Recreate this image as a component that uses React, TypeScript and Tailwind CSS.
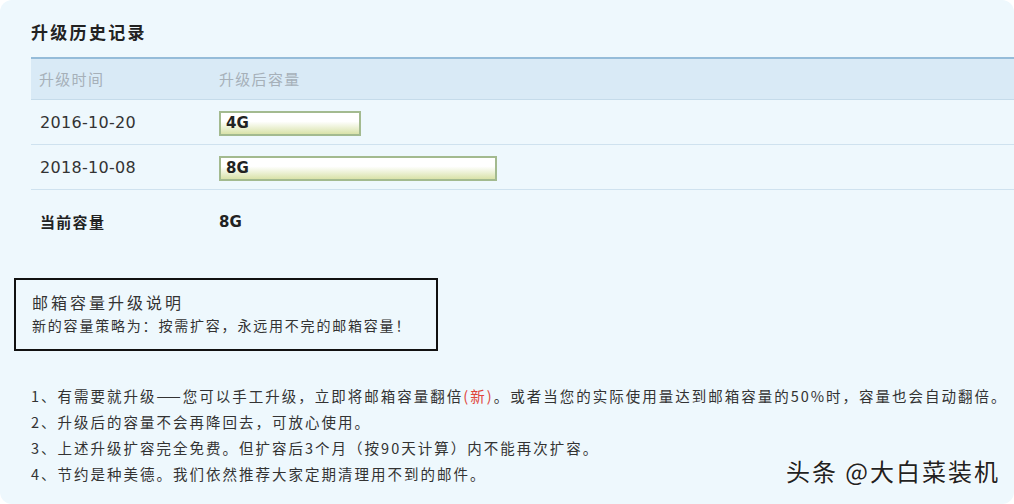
import React from 'react';

const history = [
  { date: '2016-10-20', size: '4G', width: 142 },
  { date: '2018-10-08', size: '8G', width: 278 },
];

const notes = [
  <>1、有需要就升级——您可以手工升级，立即将邮箱容量翻倍<span className="text-[#e0463c]">(新)</span>。或者当您的实际使用量达到邮箱容量的50%时，容量也会自动翻倍。</>,
  <>2、升级后的容量不会再降回去，可放心使用。</>,
  <>3、上述升级扩容完全免费。但扩容后3个月（按90天计算）内不能再次扩容。</>,
  <>4、节约是种美德。我们依然推荐大家定期清理用不到的邮件。</>,
];

export default function App() {
  return (
    <div className="w-[1014px] h-[504px] bg-white overflow-hidden font-['Noto_Sans_CJK_SC',sans-serif]">
      <div className="relative w-full h-full bg-[#eef8fd] rounded-[12px] overflow-hidden">
        {/* title */}
        <div className="pt-[20px] pl-[31px] h-[57px]">
          <h2 className="text-[17px] leading-[24px] font-bold tracking-[2.3px] text-[#222]">升级历史记录</h2>
        </div>

        {/* table */}
        <div className="ml-[31px] border-t-2 border-[#95bcd9]">
          <div className="grid grid-cols-[188px_1fr] h-[41px] items-center bg-[#d9eaf6] border-b border-[#c5dbea] text-[15px] tracking-[1.3px] text-[#a6b0b9]">
            <div className="pl-[8px]">升级时间</div>
            <div>升级后容量</div>
          </div>
          {history.map((row) => (
            <div key={row.date} className="grid grid-cols-[188px_1fr] h-[45px] items-center border-b border-[#cfe2ef]">
              <div className="pl-[9px] text-[16px] text-[#333] font-['DejaVu_Sans','Noto_Sans_CJK_SC',sans-serif] tracking-[0.3px] pt-[2px]">
                {row.date}
              </div>
              <div className="pt-[2px]">
                <div
                  className="h-[25px] border-2 border-[#a3ba8f] bg-gradient-to-b from-white from-40% to-[#d9e2a8] flex items-center pl-[5px] text-[15px] font-bold text-[#222] font-['DejaVu_Sans',sans-serif]"
                  style={{ width: row.width }}
                >
                  {row.size}
                </div>
              </div>
            </div>
          ))}
          <div className="grid grid-cols-[188px_1fr] h-[65px] items-center">
            <div className="pl-[9px] text-[15px] font-bold tracking-[1.3px] text-[#222]">当前容量</div>
            <div className="text-[15px] font-bold text-[#222] font-['DejaVu_Sans',sans-serif]">8G</div>
          </div>
        </div>

        {/* explanation box */}
        <div className="mt-[23px] ml-[14px] w-[424px] h-[73px] border-2 border-[#111] pl-[16px] pt-[10px]">
          <div className="text-[16px] leading-[24px] tracking-[3px] text-[#333]">邮箱容量升级说明</div>
          <div className="text-[14px] leading-[22px] tracking-[1.8px] text-[#333]">新的容量策略为：按需扩容，永远用不完的邮箱容量！</div>
        </div>

        {/* notes */}
        <ul className="mt-[32px] ml-[31px] text-[14.5px] leading-[26px] tracking-[2px] text-[#333]">
          {notes.map((n, i) => (
            <li key={i} className="whitespace-nowrap">{n}</li>
          ))}
        </ul>

        {/* watermark */}
        <div className="absolute right-[14px] bottom-[19px] text-[24px] leading-[28px] tracking-[2px] text-[#222] [text-shadow:0_0_2px_#fff,0_0_2px_#fff]">
          头条 @大白菜装机
        </div>
      </div>
    </div>
  );
}
